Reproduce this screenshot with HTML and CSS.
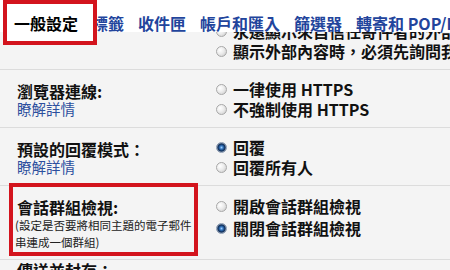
FILE: index.html
```html
<!DOCTYPE html>
<html lang="zh-Hant">
<head>
  <meta charset="UTF-8">
  <title>一般設定</title>
  <link rel="stylesheet" href="styles.css">
</head>
<body>

  <nav class="tabs">
    <span class="tab active">一般設定</span>
    <a class="tab">標籤</a>
    <a class="tab">收件匣</a>
    <a class="tab">帳戶和匯入</a>
    <a class="tab">篩選器</a>
    <a class="tab">轉寄和 POP/IMAP</a>
  </nav>

  <div class="settings">
    <!-- 外部內容 (上方被分頁列遮住) -->
    <div class="row first">
      <div class="label"></div>
      <div class="options">
        <label class="opt"><span class="radio"></span>永遠顯示來自信任寄件者的外部內容</label>
        <label class="opt"><span class="radio"></span>顯示外部內容時，必須先詢問我</label>
      </div>
    </div>

    <div class="row">
      <div class="label">
        <div class="title">瀏覽器連線:</div>
        <a class="help">瞭解詳情</a>
      </div>
      <div class="options">
        <label class="opt"><span class="radio"></span>一律使用 HTTPS</label>
        <label class="opt"><span class="radio"></span>不強制使用 HTTPS</label>
      </div>
    </div>

    <div class="row">
      <div class="label">
        <div class="title">預設的回覆模式：</div>
        <a class="help">瞭解詳情</a>
      </div>
      <div class="options">
        <label class="opt"><span class="radio checked"></span>回覆</label>
        <label class="opt"><span class="radio"></span>回覆所有人</label>
      </div>
    </div>

    <div class="row">
      <div class="label marked">
        <div class="title">會話群組檢視:</div>
        <div class="note">(設定是否要將相同主題的電子郵件<br>串連成一個群組)</div>
      </div>
      <div class="options wide">
        <label class="opt"><span class="radio"></span>開啟會話群組檢視</label>
        <label class="opt"><span class="radio checked"></span>關閉會話群組檢視</label>
      </div>
    </div>

    <div class="row last">
      <div class="label">
        <div class="title">傳送並封存：</div>
      </div>
      <div class="options"></div>
    </div>
  </div>

</body>
</html>
```

FILE: styles.css
```css
body {
  margin: 0;
  width: 450px;
  height: 270px;
  overflow: hidden;
  background-color: #f4f4f4;
  color: #111;
  font-family: "Noto Sans CJK TC", "Liberation Sans", sans-serif;
}

/* Barra de pestañas */
.tabs {
  position: relative;
  z-index: 2;
  height: 32px;
  background: #fff;
  display: flex;
  align-items: flex-start;
  gap: 14px;
  padding-left: 3px;
  white-space: nowrap;
  overflow: visible;
}

.tab {
  flex: none;
  font-size: 16px;
  line-height: 20px;
  padding-top: 13px;
  color: #22449c;
  font-weight: bold;
}

.tab.active {
  position: relative;
  z-index: 1;
  box-sizing: border-box;
  width: 94px;
  height: 45px;
  border: 4px solid #d3141d;
  padding: 9px 0 0 7px;
  background: #fff;
  color: #000;
  margin-right: -19px;
}

/* Filas de ajustes */
.settings {
  margin-top: -20px;
}

.row {
  display: grid;
  grid-template-columns: 216px 1fr;
  padding: 9px 0 8px;
  border-bottom: 1px solid #dcdcdc;
}

.row.last {
  border-bottom: none;
  padding-top: 0;
}

.row.last .title {
  margin-top: 0;
}

.label {
  padding-left: 17px;
}

.title {
  font-size: 16px;
  font-weight: bold;
  line-height: 20px;
  margin-top: 2px;
}

.help {
  display: block;
  font-size: 14.5px;
  line-height: 15px;
  color: #2d4f9e;
}

.note {
  font-size: 11.5px;
  line-height: 17px;
  margin-left: -2px;
  color: #222;
}

.marked {
  position: relative;
}

.marked::after {
  content: "";
  position: absolute;
  left: 9px;
  right: 18px;
  top: -12px;
  bottom: -5px;
  border: 4px solid #d3141d;
}

.options {
  display: flex;
  flex-direction: column;
}

.opt {
  display: flex;
  align-items: center;
  gap: 6px;
  height: 20px;
  font-size: 16px;
  font-weight: bold;
  white-space: nowrap;
}

.options.wide .opt {
  height: 22px;
}

.radio {
  flex: none;
  box-sizing: border-box;
  width: 11px;
  height: 11px;
  border-radius: 50%;
  border: 1px solid #a8a8a8;
  background: radial-gradient(circle at 35% 35%, #fff 0, #ececec 45%, #c6c6c6 100%);
}

.radio.checked {
  border-color: #8a9ab0;
  background: radial-gradient(circle at 50% 50%, #9fd0ff 0, #2f6fb8 28%, #0e2c55 55%, #6f83a0 70%, #dfe6ee 100%);
}
```
